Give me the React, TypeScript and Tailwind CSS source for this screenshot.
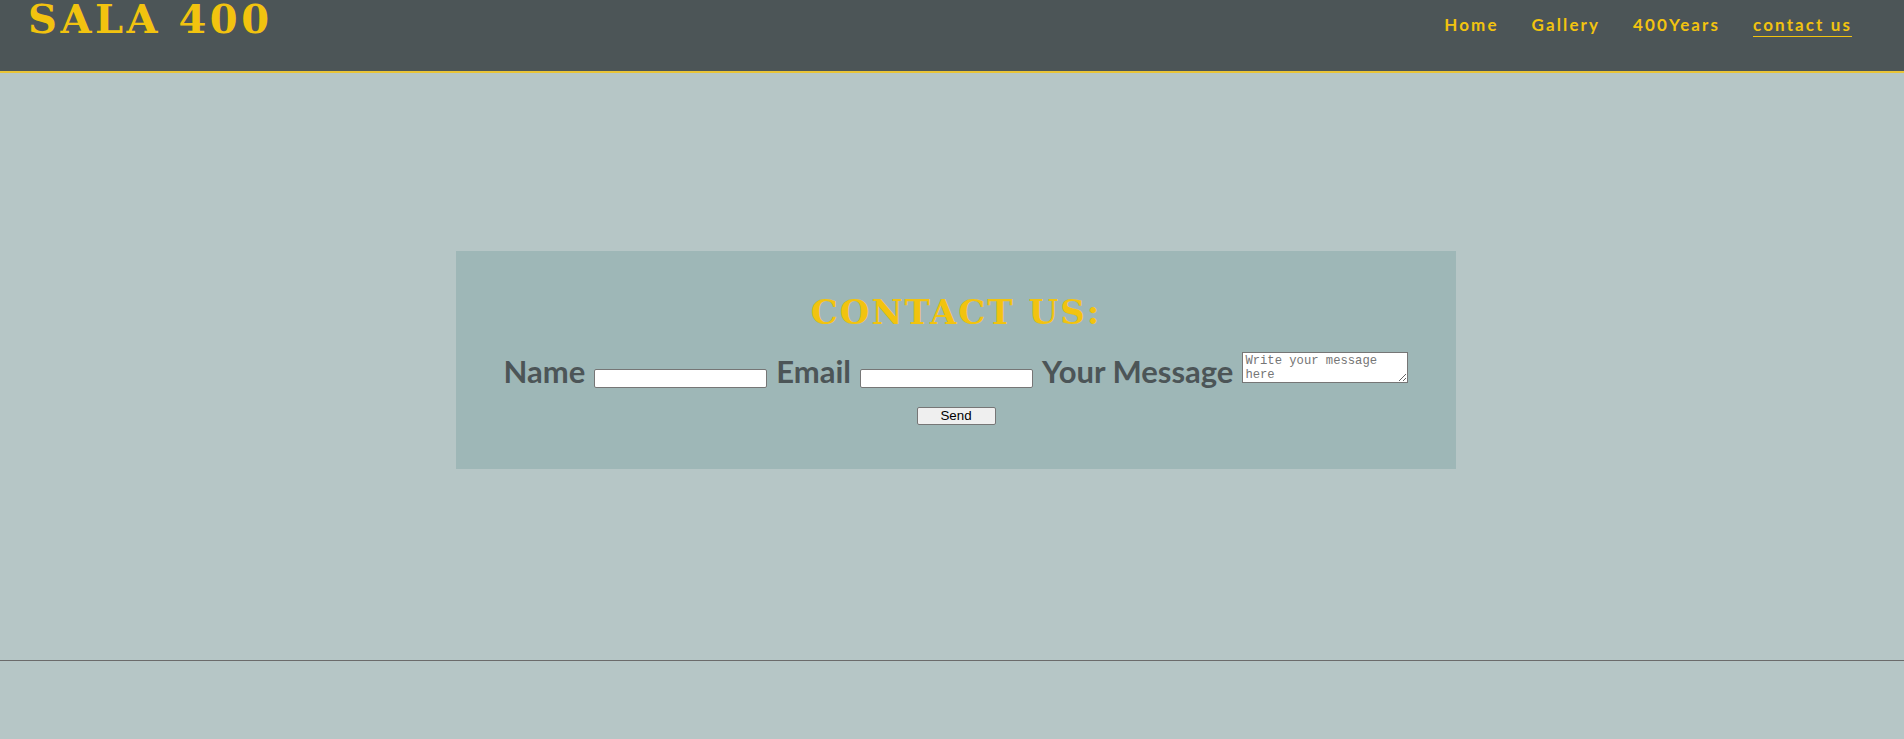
import React from 'react';

const navItems = [
  { label: 'Home', active: false },
  { label: 'Gallery', active: false },
  { label: '400Years', active: false },
  { label: 'contact us', active: true },
];

const Header: React.FC = () => (
  <header className="flex items-start justify-between h-[73px] bg-[#4c5557] border-b-2 border-[#e9c437] pl-[28px] pr-[52px]">
    <h1 className="mt-[2px] font-['DejaVu_Serif',serif] font-bold text-[40px] leading-[33px] tracking-[3.5px] text-[#f2c30f] oldstyle-nums">
      SALA 400
    </h1>
    <nav className="flex gap-[33px] pt-[15px]">
      {navItems.map(({ label, active }) => (
        <a
          key={label}
          href="#"
          className={
            active
              ? "font-['Lato',sans-serif] font-bold text-[17px] leading-[20px] tracking-[2.1px] text-[#f2c30f] pb-[1px] border-b border-[#f2c30f]"
              : "font-['Lato',sans-serif] font-bold text-[17px] leading-[20px] tracking-[2.1px] text-[#f2c30f] pb-[1px] border-b border-transparent"
          }
        >
          {label}
        </a>
      ))}
    </nav>
  </header>
);

const ContactForm: React.FC = () => (
  <section className="w-[1000px] bg-[#9eb7b7] pt-[44px] pb-[44px]">
    <h2 className="text-center font-['DejaVu_Serif',serif] font-bold text-[34px] leading-[34px] tracking-[2px] text-[#f2c30f]">
      CONTACT US:
    </h2>
    <form className="mt-[23px] text-center font-['Lato',sans-serif] font-bold text-[31px] leading-[36px] text-[#4c5557]">
      <div>
        <label>Name</label>
        <input
          type="text"
          className="mx-[9px] w-[173px] h-[19px] bg-white border border-[#767676] rounded-[2px] align-baseline text-[13px]"
        />
        <label>Email</label>
        <input
          type="email"
          className="mx-[9px] w-[173px] h-[19px] bg-white border border-[#767676] rounded-[2px] align-baseline text-[13px]"
        />
        <label>Your Message</label>
        <textarea
          placeholder="Write your message here"
          className="ml-[9px] w-[166px] h-[31px] bg-white border border-[#767676] px-[2px] py-[1px] align-baseline font-['Liberation_Mono',monospace] font-normal text-[12.2px] leading-[14px] text-left placeholder:text-[#757575]"
        />
      </div>
      <div className="flex justify-center mt-[18px]">
        <button
          type="button"
          className="w-[79px] h-[18px] bg-[#efefef] border border-[#767676] rounded-[2px] font-['Liberation_Sans',sans-serif] font-normal text-[13.33px] leading-[16px] text-black"
        >
          Send
        </button>
      </div>
    </form>
  </section>
);

export default function App() {
  return (
    <div className="min-h-[739px] bg-[#b6c6c6]">
      <Header />
      <main className="h-[587px] flex justify-center pl-[8px] pt-[178px]">
        <div>
          <ContactForm />
        </div>
      </main>
      <footer className="h-[79px] border-t border-[#6b6b6b]" />
    </div>
  );
}
